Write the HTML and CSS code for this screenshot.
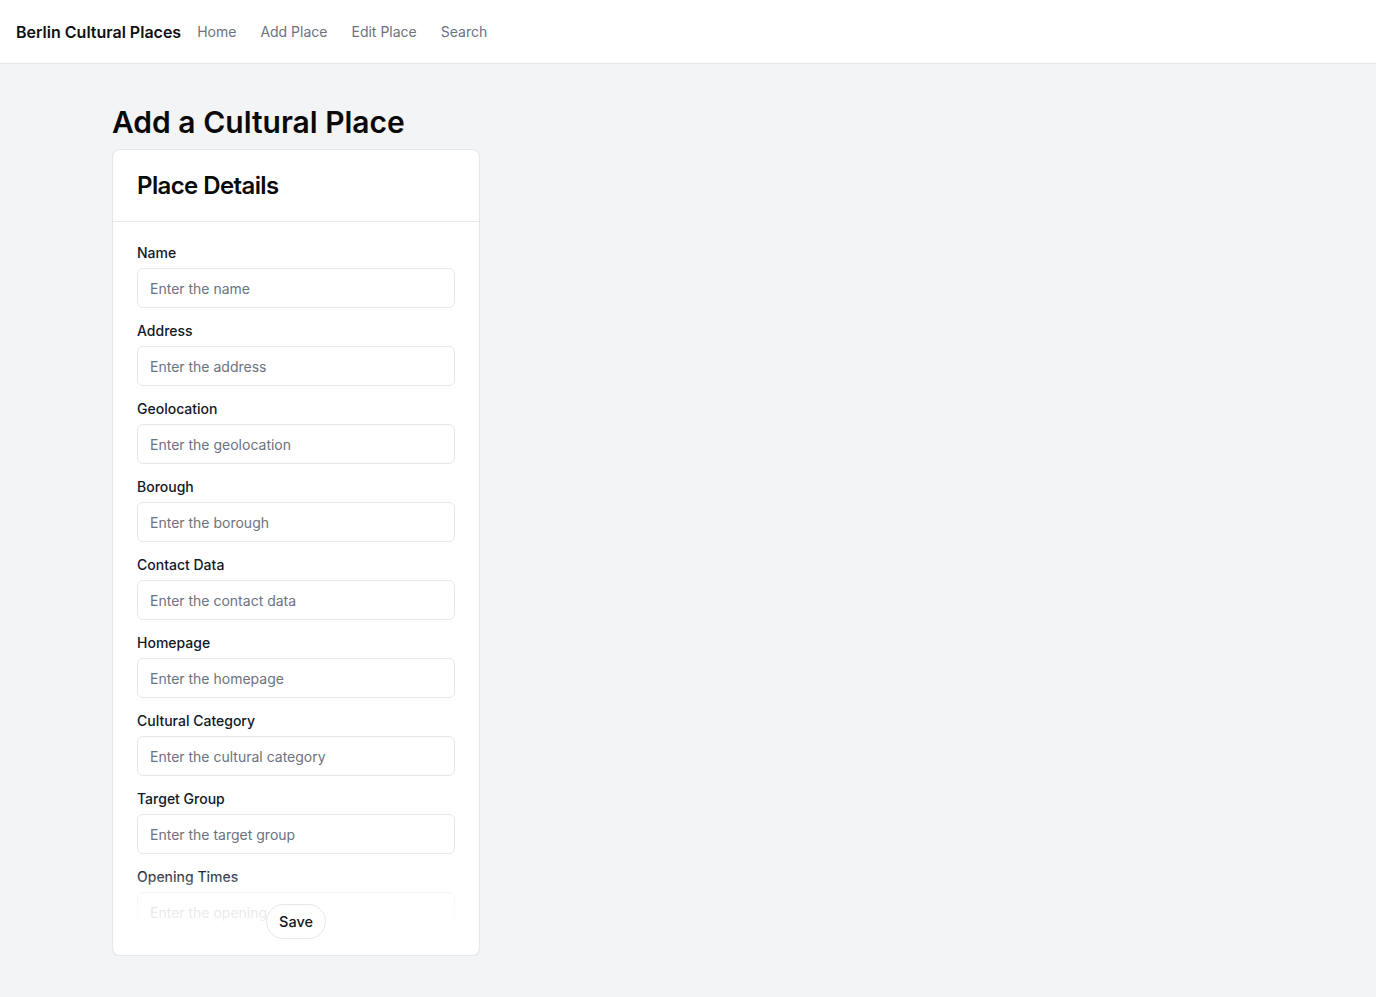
FILE: index.html
```html
<!DOCTYPE html>
<html lang="en">
<head>
<meta charset="utf-8">
<title>Berlin Cultural Places</title>
<link rel="stylesheet" href="styles.css">
</head>
<body>
<header class="topbar">
  <div class="brand">Berlin Cultural Places</div>
  <nav class="nav">
    <a href="#">Home</a>
    <a href="#">Add Place</a>
    <a href="#">Edit Place</a>
    <a href="#">Search</a>
  </nav>
</header>
<main class="page">
  <h1 class="title">Add a Cultural Place</h1>
  <section class="card">
    <div class="card-header">
      <h2>Place Details</h2>
    </div>
    <div class="card-body">
      <div class="fields">
        <div class="field"><label>Name</label><input type="text" placeholder="Enter the name"></div>
        <div class="field"><label>Address</label><input type="text" placeholder="Enter the address"></div>
        <div class="field"><label>Geolocation</label><input type="text" placeholder="Enter the geolocation"></div>
        <div class="field"><label>Borough</label><input type="text" placeholder="Enter the borough"></div>
        <div class="field"><label>Contact Data</label><input type="text" placeholder="Enter the contact data"></div>
        <div class="field"><label>Homepage</label><input type="text" placeholder="Enter the homepage"></div>
        <div class="field"><label>Cultural Category</label><input type="text" placeholder="Enter the cultural category"></div>
        <div class="field"><label>Target Group</label><input type="text" placeholder="Enter the target group"></div>
        <div class="field"><label>Opening Times</label><input type="text" placeholder="Enter the opening times"></div>
      </div>
      <div class="fade"></div>
      <button class="save" type="button">Save</button>
    </div>
  </section>
</main>
</body>
</html>
```
FILE: styles.css
```css
* { box-sizing: border-box; }
html, body { margin: 0; }
body {
  background: #f3f4f6;
  font-family: Inter, "Noto Sans", sans-serif;
  color: #111827;
}
.topbar {
  height: 64px;
  background: #ffffff;
  border-bottom: 1px solid #e5e7eb;
  display: flex;
  align-items: center;
  padding: 0 16px;
  gap: 16px;
}
.brand {
  font-size: 16px;
  font-weight: 600;
  color: #111111;
}
.nav {
  display: flex;
  gap: 24px;
}
.nav a {
  font-size: 14px;
  color: #6b7280;
  text-decoration: none;
}
.page {
  width: 1152px;
  margin: 0 auto;
  padding-top: 40px;
}
.title {
  margin: 0 0 9px;
  font-size: 30px;
  line-height: 36px;
  font-weight: 600;
  color: #0a0a0a;
}
.card {
  width: 368px;
  background: #ffffff;
  border: 1px solid #e5e7eb;
  border-radius: 8px;
  box-shadow: 0 1px 2px rgba(0, 0, 0, 0.04);
}
.card-header {
  padding: 20px 24px 19px;
  border-bottom: 1px solid #e5e7eb;
}
.card-header h2 {
  margin: 0;
  font-size: 24px;
  line-height: 32px;
  font-weight: 600;
  letter-spacing: -0.025em;
  color: #0a0a0a;
}
.card-body {
  position: relative;
  padding: 20px 24px 23px;
}
.fields {
  height: 690px;
  overflow: hidden;
  display: flex;
  flex-direction: column;
  gap: 12px;
}
.field label {
  display: block;
  font-size: 14px;
  line-height: 22px;
  font-weight: 500;
  color: #111827;
  margin-bottom: 4px;
}
.field input {
  display: block;
  width: 100%;
  height: 40px;
  border: 1px solid #e5e7eb;
  border-radius: 6px;
  padding: 0 12px;
  font-family: Inter, "Noto Sans", sans-serif;
  font-size: 14px;
  color: #111827;
  background: #ffffff;
}
.field input::placeholder { color: #6b7280; }
.fade {
  position: absolute;
  left: 0;
  right: 0;
  bottom: 23px;
  height: 64px;
  background: linear-gradient(to bottom, rgba(255,255,255,0) 0%, rgba(255,255,255,0.82) 62%, rgba(255,255,255,0.92) 100%);
  pointer-events: none;
}
.save {
  position: absolute;
  left: 50%;
  bottom: 16px;
  transform: translateX(-50%);
  padding: 7px 12px;
  font-family: Inter, "Noto Sans", sans-serif;
  font-size: 14.5px;
  line-height: 19px;
  font-weight: 500;
  color: #111827;
  background: #ffffff;
  border: 1px solid #e5e7eb;
  border-radius: 9999px;
}
```
